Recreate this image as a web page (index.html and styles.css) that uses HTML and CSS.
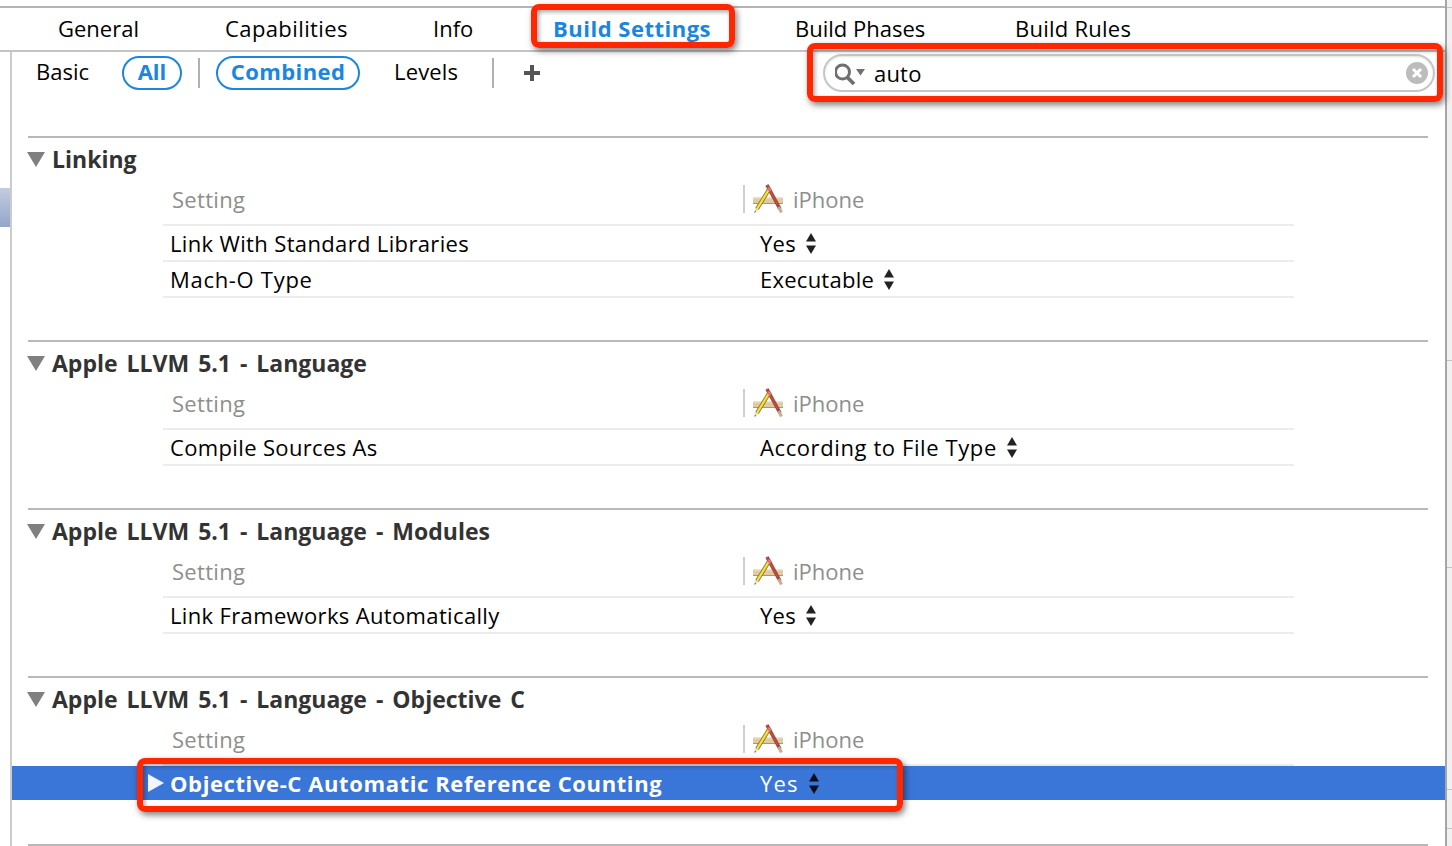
FILE: index.html
```html
<!DOCTYPE html>
<html lang="en">
<head>
<meta charset="utf-8">
<title>Build Settings</title>
<link rel="stylesheet" href="styles.css">
</head>
<body>
<svg class="defs" width="0" height="0" aria-hidden="true">
  <symbol id="stepper" viewBox="0 0 12 24"><path d="M6 2 11 10.500H1Z"/><path d="M1 14.500H11L6 23Z"/></symbol>
  <symbol id="xcode" viewBox="0 0 30 30">
    <path d="M0 14H30V21H0Z" fill="#e2c9a2"/>
    <path d="M0 14H30V15.500H0Z" fill="#f0e0c4"/>
    <path d="M0 20H30V21H0Z" fill="#b29470"/>
    <path d="M14 2 27 26" stroke="#8a4a40" stroke-width="3.600" fill="none"/>
    <path d="M14 2 25 22.500" stroke="#cf4a34" stroke-width="1.800" fill="none"/>
    <path d="M25.500 24 28.500 29.500" stroke="#c9ab94" stroke-width="3" fill="none"/>
    <path d="M16.500 5.500 4 26" stroke="#85722a" stroke-width="4" fill="none"/>
    <path d="M16.500 5.500 4 26" stroke="#f7e038" stroke-width="2.400" fill="none"/>
    <path d="M15.800 4 18.800 6 17 8.800 14 7Z" fill="#e8707a"/>
    <path d="M2.400 24.800 5.800 26.800 1.500 29.800Z" fill="#ead9b5"/>
    <path d="M1.900 28 3.100 28.700 1.500 29.800Z" fill="#222"/>
  </symbol>
</svg>
<div class="window">
  <div class="pane">
    <nav class="tabs">
      <span class="tab">General</span>
      <span class="tab tab-cap">Capabilities</span>
      <span class="tab">Info</span>
      <span class="tab tab-on">Build Settings</span>
      <span class="tab">Build Phases</span>
      <span class="tab tab-rules">Build Rules</span>
    </nav>
    <div class="body-row">
      <aside class="gutter"><div class="gutter-sel"></div></aside>
      <main class="content">
        <div class="toolbar">
          <span class="flt flt-basic">Basic</span>
          <span class="pill pill-all">All</span>
          <span class="sep sep-a"></span>
          <span class="pill pill-combined">Combined</span>
          <span class="flt flt-levels">Levels</span>
          <span class="sep sep-b"></span>
          <svg class="plus" width="18" height="18" viewBox="0 0 18 18"><path d="M7 1h4v6h6v4h-6v6H7v-6H1V7h6Z" fill="#555"/></svg>
          <div class="search">
            <svg class="mag" width="32" height="24" viewBox="0 0 32 24"><circle cx="7.500" cy="11" r="7" fill="none" stroke="#707070" stroke-width="3"/><path d="M12.500 16.500 19 23" stroke="#707070" stroke-width="3.800"/><path d="M21 8h9l-4.500 6.500Z" fill="#707070"/></svg>
            <span class="search-text">auto</span>
            <svg class="clear" width="22" height="22" viewBox="0 0 22 22"><circle cx="11" cy="11" r="11" fill="#bcbcbc"/><path d="M7 7 15 15M15 7 7 15" stroke="#fff" stroke-width="3"/></svg>
          </div>
        </div>

        <section class="section">
          <div class="rule"></div>
          <h2 class="title"><i class="tri"></i>Linking</h2>
          <div class="head"><span class="head-l">Setting</span><span class="head-r"><svg class="xc" width="30" height="30"><use href="#xcode"/></svg>iPhone</span></div>
          <div class="row"><span class="label">Link With Standard Libraries</span><span class="value">Yes<svg class="step" width="12" height="24"><use href="#stepper"/></svg></span></div>
          <div class="row"><span class="label label-mach">Mach-O Type</span><span class="value">Executable<svg class="step" width="12" height="24"><use href="#stepper"/></svg></span></div>
        </section>

        <section class="section">
          <div class="rule"></div>
          <h2 class="title"><i class="tri"></i>Apple LLVM 5.1 - Language</h2>
          <div class="head"><span class="head-l">Setting</span><span class="head-r"><svg class="xc" width="30" height="30"><use href="#xcode"/></svg>iPhone</span></div>
          <div class="row"><span class="label">Compile Sources As</span><span class="value value-long">According to File Type<svg class="step" width="12" height="24"><use href="#stepper"/></svg></span></div>
        </section>

        <section class="section">
          <div class="rule"></div>
          <h2 class="title"><i class="tri"></i>Apple LLVM 5.1 - Language - Modules</h2>
          <div class="head"><span class="head-l">Setting</span><span class="head-r"><svg class="xc" width="30" height="30"><use href="#xcode"/></svg>iPhone</span></div>
          <div class="row"><span class="label">Link Frameworks Automatically</span><span class="value">Yes<svg class="step" width="12" height="24"><use href="#stepper"/></svg></span></div>
        </section>

        <section class="section">
          <div class="rule"></div>
          <h2 class="title"><i class="tri"></i>Apple LLVM 5.1 - Language - Objective C</h2>
          <div class="head"><span class="head-l">Setting</span><span class="head-r"><svg class="xc" width="30" height="30"><use href="#xcode"/></svg>iPhone</span></div>
          <div class="row row-sel"><i class="tri-r"></i><span class="label">Objective-C Automatic Reference Counting</span><span class="value">Yes<svg class="step" width="12" height="24"><use href="#stepper"/></svg></span></div>
        </section>

        <div class="rule"></div>
      </main>
    </div>
  </div>
  <div class="strip">
    <span class="tick t1"></span>
    <span class="tick t2"></span>
    <span class="tick t3"></span>
    <span class="tick t4"></span>
    <span class="tick t5"></span>
  </div>
</div>
<div class="callout callout-tab"></div>
<div class="callout callout-search"></div>
<div class="callout callout-row"></div>
</body>
</html>
```

FILE: styles.css
```css
* { box-sizing: border-box; }
html, body { margin: 0; height: 846px; overflow: hidden; background: #fff; }
body { position: relative; width: 1452px; font-family: "Open Sans", "Liberation Sans", sans-serif; font-size: 22px; color: #000; }
.defs { position: absolute; }
.window { display: flex; height: 846px; }
.pane { width: 1445px; display: flex; flex-direction: column; }

.tabs { margin-top: 6px; height: 46px; padding-left: 58px; padding-bottom: 2px; border-top: 2px solid #b5b5b5; border-bottom: 2px solid #c4c4c4; display: grid; grid-template-columns: 167px 208px 120px 242px 220px auto; align-items: center; }
.tab { line-height: 38px; }
.tab-cap { letter-spacing: .4px; }
.tab-rules { letter-spacing: .25px; }
.tab-on { color: #1a86e0; font-weight: 700; letter-spacing: .5px; }

.body-row { display: flex; flex: 1; }
.gutter { width: 10px; padding-top: 136px; }
.gutter-sel { height: 39px; background: linear-gradient(#c3cde1, #93a5c9); }
.content { width: 1435px; border-left: 2px solid #cbcbcb; }

.toolbar { height: 84px; display: flex; align-items: flex-start; padding-left: 24px; padding-top: 4px; }
.flt { line-height: 31px; }
.flt-basic { width: 86px; }
.flt-levels { margin-left: 34px; width: 98px; letter-spacing: .15px; }
.pill { height: 34px; line-height: 27px; border: 2px solid #1a86e0; border-radius: 17px; color: #1a86e0; font-weight: 700; text-align: center; }
.pill-all { width: 60px; }
.pill-combined { width: 144px; letter-spacing: .4px; }
.sep { width: 2px; height: 30px; margin-top: 2px; background: #b0b0b0; }
.sep-a { margin-left: 16px; margin-right: 16px; }
.sep-b { margin-right: 29px; }
.plus { margin-top: 8px; }
.search { margin-left: auto; margin-right: 10px; margin-top: -2px; width: 612px; height: 38px; border: 2px solid #c6c6c6; border-radius: 19px; display: flex; align-items: center; padding-left: 10px; padding-right: 5px; box-shadow: inset 0 1px 2px rgba(0,0,0,.12); }
.mag { flex: none; }
.search-text { margin-left: 7px; flex: 1; line-height: 34px; letter-spacing: .2px; }
.clear { flex: none; }

.section { margin-bottom: 42px; }
.rule { height: 2px; margin-left: 16px; margin-right: 17px; background: #b9b9b9; }
.title { margin: 0; height: 44px; padding-left: 15px; padding-bottom: 2px; display: flex; align-items: center; font-size: 23px; font-weight: 700; color: #333; word-spacing: 3px; }
.tri { width: 0; height: 0; margin-right: 7px; margin-top: 1px; border-left: 9px solid transparent; border-right: 9px solid transparent; border-top: 15px solid #808080; }
.head { height: 44px; margin-left: 151px; width: 1131px; padding-left: 9px; padding-bottom: 8px; display: flex; align-items: center; border-bottom: 2px solid #ececec; color: #8e8e8e; }
.head-l { width: 571px; letter-spacing: .3px; }
.head-r { display: flex; align-items: center; height: 28px; border-left: 2px solid #cfcfcf; padding-left: 8px; }
.xc { flex: none; margin-right: 10px; margin-top: -2px; }
.row { height: 36px; margin-left: 151px; width: 1131px; padding-left: 7px; display: flex; align-items: center; border-bottom: 2px solid #ececec; padding-bottom: 1px; }
.label { width: 590px; letter-spacing: .35px; }
.label-mach { letter-spacing: .7px; }
.value { display: flex; align-items: center; letter-spacing: .25px; }
.value-long { letter-spacing: .6px; }
.step { flex: none; margin-left: 9px; fill: #222; }
.row-sel { margin-left: 0; width: auto; height: 36px; border-bottom: 2px solid #fff; padding-left: 158px; background: #3a75d8; color: #fff; padding-bottom: 0; }
.row-sel .label { font-weight: 700; letter-spacing: .6px; }
.row-sel .value { letter-spacing: 1.2px; }
.row-sel .step { fill: #0b0f20; }
.tri-r { width: 0; height: 0; margin-left: -22px; margin-right: 6px; border-top: 9.500px solid transparent; border-bottom: 9.500px solid transparent; border-left: 16px solid #f2f5fc; }

.strip { flex: 1; border-left: 2px solid #a6a6a6; background: #f1f1f1; display: flex; flex-direction: column; }
.tick { display: block; flex: none; border-bottom: 1px solid #c2c2c2; }
.t1 { height: 8px; }
.t2 { height: 353px; }
.t3 { height: 207px; }
.t4 { height: 222px; }
.t5 { height: 39px; }

.callout { position: absolute; border: 6px solid #ff2600; border-radius: 8px; box-shadow: 2px 3px 6px rgba(0,0,0,.5), inset 2px 2px 4px rgba(0,0,0,.35); }
.callout-tab { left: 531px; top: 4px; width: 204px; height: 44px; }
.callout-search { left: 807px; top: 43px; width: 636px; height: 59px; }
.callout-row { left: 137px; top: 758px; width: 766px; height: 54px; }
```
